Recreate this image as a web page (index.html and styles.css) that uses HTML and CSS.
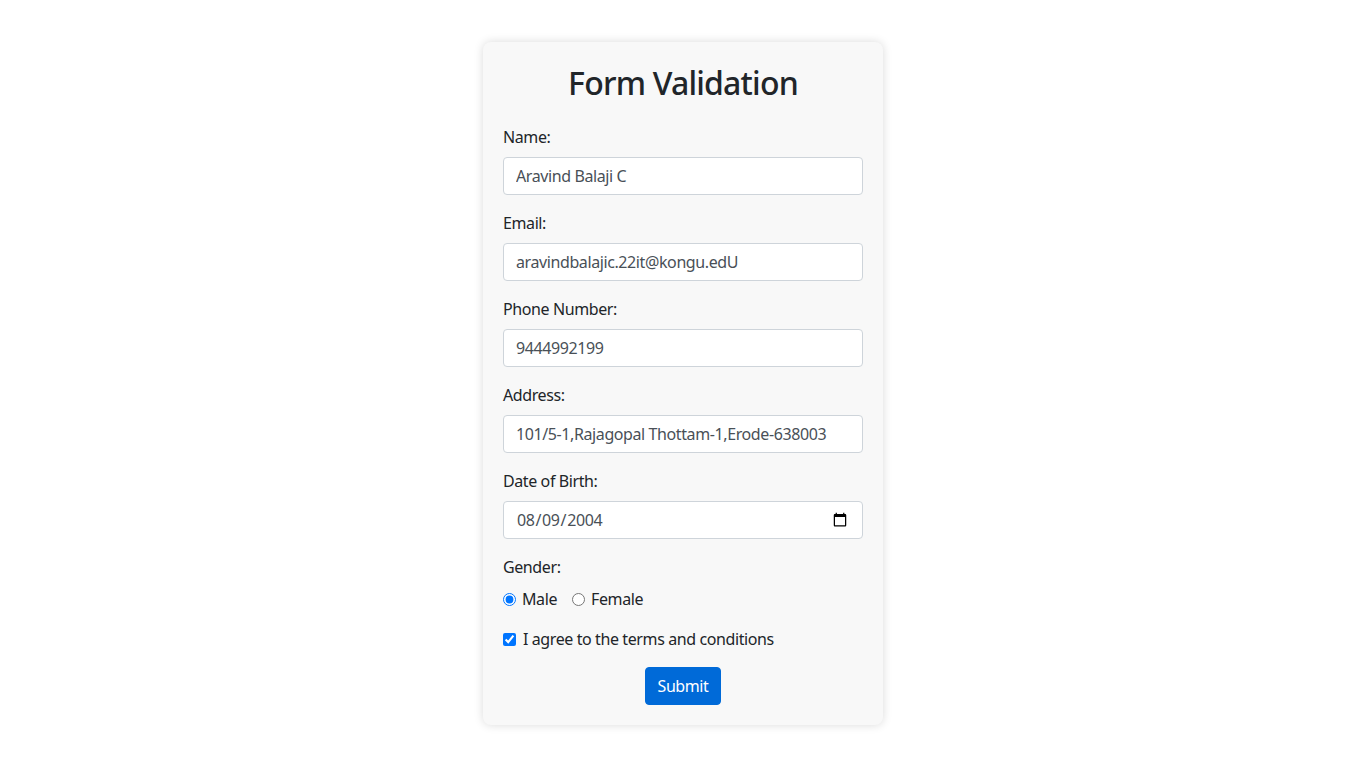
FILE: index.html
```html
<!DOCTYPE html>
<html lang="en">
<head>
<meta charset="utf-8">
<title>Form Validation</title>
<link rel="stylesheet" href="styles.css">
</head>
<body>
<div class="card">
  <h2 class="title">Form Validation</h2>
  <form class="form">
    <div class="group">
      <label class="label" for="name">Name:</label>
      <input class="control" id="name" type="text" value="Aravind Balaji C">
    </div>
    <div class="group">
      <label class="label" for="email">Email:</label>
      <input class="control" id="email" type="text" value="aravindbalajic.22it@kongu.edU">
    </div>
    <div class="group">
      <label class="label" for="phone">Phone Number:</label>
      <input class="control" id="phone" type="text" value="9444992199">
    </div>
    <div class="group">
      <label class="label" for="address">Address:</label>
      <input class="control" id="address" type="text" value="101/5-1,Rajagopal Thottam-1,Erode-638003">
    </div>
    <div class="group">
      <label class="label" for="dob">Date of Birth:</label>
      <input class="control" id="dob" type="date" value="2004-08-09">
    </div>
    <div class="group">
      <span class="label">Gender:</span>
      <div class="radios">
        <label class="option"><input type="radio" name="gender" checked> Male</label>
        <label class="option"><input type="radio" name="gender"> Female</label>
      </div>
    </div>
    <div class="check-row">
      <label class="option option-check"><input type="checkbox" checked> I agree to the terms and conditions</label>
    </div>
    <div class="actions">
      <button type="button" class="btn">Submit</button>
    </div>
  </form>
</div>
</body>
</html>
```

FILE: styles.css
```css
* { box-sizing: border-box; }
html, body { margin: 0; padding: 0; }
body {
  background: #ffffff;
  font-family: "Noto Sans", "Open Sans", sans-serif;
  font-size: 16px;
  line-height: 24px;
  letter-spacing: -0.4px;
  color: #212529;
  display: flex;
  justify-content: center;
  padding-top: 42px;
  min-height: 768px;
  align-items: flex-start;
}
.card {
  width: 400px;
  background: #f8f8f8;
  border-radius: 8px;
  box-shadow: 0 0 10px rgba(0, 0, 0, 0.15);
  padding: 20px;
}
.title {
  margin: 1px 0 22px;
  text-align: center;
  font-size: 32px;
  font-weight: 500;
  line-height: 40px;
  letter-spacing: -0.8px;
  color: #212529;
}
.form { display: flex; flex-direction: column; }
.group { display: flex; flex-direction: column; margin-bottom: 16px; }
.label { display: block; margin-bottom: 8px; line-height: 24px; }
.control {
  width: 360px;
  height: 38px;
  padding: 6px 12px;
  font-family: inherit;
  font-size: 16px;
  line-height: 24px;
  letter-spacing: -0.4px;
  color: #495057;
  background: #fff;
  border: 1px solid #ced4da;
  border-radius: 4px;
}
.radios { display: flex; gap: 15px; }
.option { display: flex; align-items: center; gap: 6px; line-height: 24px; }
.option-check { gap: 7px; }
.option input { margin: 0; width: 13px; height: 13px; }
.check-row { margin-bottom: 16px; }
.actions { display: flex; justify-content: center; }
.btn {
  height: 38px;
  padding: 6px 12px;
  font-family: inherit;
  font-size: 16px;
  line-height: 24px;
  letter-spacing: -0.4px;
  color: #fff;
  background: #006ad8;
  border: 1px solid #006ad8;
  border-radius: 4px;
}
```
